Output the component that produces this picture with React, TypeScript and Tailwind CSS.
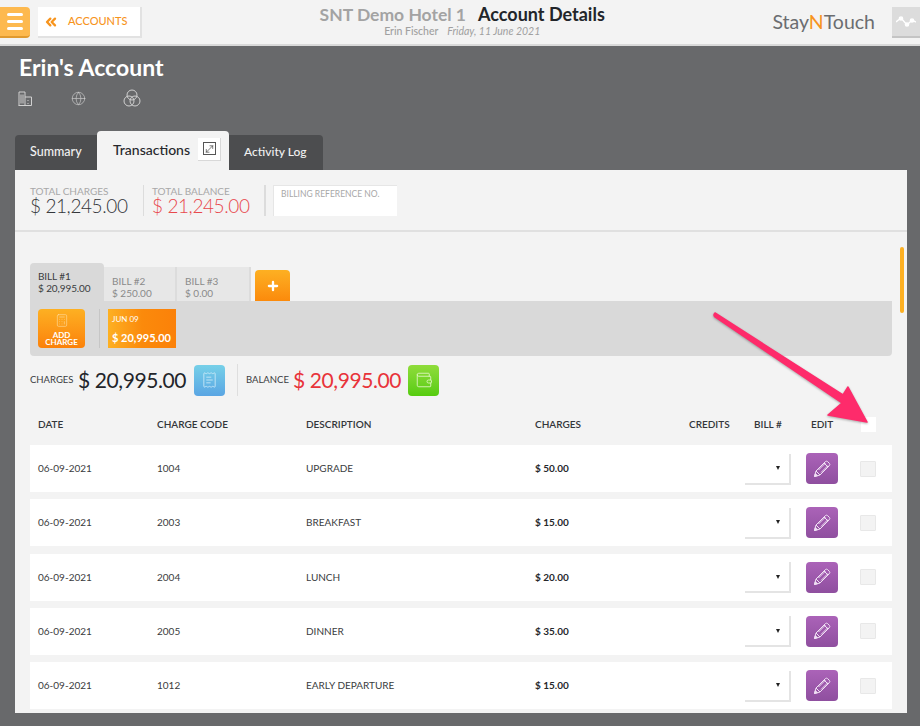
import React from 'react';
import { ChevronsLeft, Globe, MoveDiagonal, Plus, Calculator, Wallet, ReceiptText } from 'lucide-react';

interface Charge {
  date: string;
  code: string;
  description: string;
  amount: string;
}

const charges: Charge[] = [
  { date: '06-09-2021', code: '1004', description: 'UPGRADE', amount: '$ 50.00' },
  { date: '06-09-2021', code: '2003', description: 'BREAKFAST', amount: '$ 15.00' },
  { date: '06-09-2021', code: '2004', description: 'LUNCH', amount: '$ 20.00' },
  { date: '06-09-2021', code: '2005', description: 'DINNER', amount: '$ 35.00' },
  { date: '06-09-2021', code: '1012', description: 'EARLY DEPARTURE', amount: '$ 15.00' }
];

const columns = 'grid grid-cols-[119px_149px_229px_154px_56px_61px_54px_32px] items-center pl-2';

const Header = () => (
  <header className="h-[46px] bg-[#f3f3f3] border-b-2 border-[#d9d9d9] flex items-center relative">
    <button className="w-[30px] h-[31px] mt-[1px] bg-[#fdb94f] border-b-2 border-[#e09a30] rounded-r-sm flex flex-col items-center justify-center gap-[4px]">
      <span className="w-[16px] h-[3px] bg-white rounded-sm" />
      <span className="w-[16px] h-[3px] bg-white rounded-sm" />
      <span className="w-[16px] h-[3px] bg-white rounded-sm" />
    </button>
    <button className="ml-2 mt-[1px] w-[104px] h-[31px] bg-white border-r-2 border-b-2 border-[#e2e2e2] flex items-center pl-[5px] text-[#f7941d] text-[11px] font-medium">
      <ChevronsLeft className="w-[16px] h-[16px]" strokeWidth={3.5} />
      <span className="ml-[9px]">ACCOUNTS</span>
    </button>
    <div className="flex-1 flex flex-col items-center pl-[10px] -mt-[3px]">
      <div className="flex items-baseline gap-[12px] leading-[18px]">
        <span className="text-[17.5px] font-bold text-[#a3a3a3]">SNT Demo Hotel 1</span>
        <span className="text-[18px] font-bold text-[#22252a]">Account Details</span>
      </div>
      <div className="flex gap-[9px] text-[10.5px] leading-[12px] text-[#a0a0a0] mt-[1px]">
        <span className="font-medium">Erin Fischer</span>
        <span className="italic">Friday, 11 June 2021</span>
      </div>
    </div>
    <div className="text-[19.5px] text-[#6b6d70] mr-[17px]">
      Stay<span className="text-[#f7941d]">N</span>Touch
    </div>
    <button className="w-[28px] h-[31px] mt-[1px] bg-[#dcdcdc] border-b-2 border-[#c4c4c4] flex items-center justify-center">
      <svg width="20" height="12" viewBox="0 0 20 12" fill="none" stroke="white" strokeWidth="1.4">
        <path d="M0 6 L5 2 L11 9 L16 4 L20 6" />
        <circle cx="5" cy="2.5" r="1.6" fill="white" />
        <circle cx="11" cy="8.5" r="1.6" fill="white" />
        <circle cx="16" cy="4.5" r="1.6" fill="white" />
      </svg>
    </button>
  </header>
);

const TabBar = () => (
  <div className="flex items-end h-[39px] ml-[15px]">
    <div className="w-[82px] h-[35px] bg-[#4c4d4f] rounded-tl-sm flex items-center pl-[15px] text-[12.5px] font-medium text-[#f1f1f1]">Summary</div>
    <div className="w-[132px] h-[39px] bg-[#f3f3f3] rounded-t-sm flex items-center pl-[16px] pb-[3px] text-[14px] font-medium text-[#26282c]">
      Transactions
      <span className="ml-[8px] w-[23px] h-[23px] bg-white border-r border-b border-[#d8d8d8] flex items-center justify-center">
        <span className="w-[13px] h-[13px] border border-[#555] flex items-center justify-center">
          <MoveDiagonal className="w-[12px] h-[12px] text-[#333]" strokeWidth={1.4} />
        </span>
      </span>
    </div>
    <div className="w-[94px] h-[35px] bg-[#4c4d4f] rounded-tr-sm flex items-center pl-[15px] pb-[1px] text-[12px] font-medium text-[#f1f1f1]">Activity Log</div>
  </div>
);

const Totals = () => (
  <div className="h-[62px] border-b-2 border-[#e0e0e0] flex items-start pl-[15px] pt-[15px] whitespace-nowrap">
    <div className="w-[113px] h-[31px] pt-[1px] flex flex-col">
      <span className="text-[10px] leading-[11px] text-[#a8a8a8]">TOTAL CHARGES</span>
      <span className="text-[19px] leading-[17px] font-light tracking-[-0.4px] text-[#33363a]">$ 21,245.00</span>
    </div>
    <div className="w-[121px] h-[31px] pt-[1px] border-l border-[#dcdcdc] pl-[8px] flex flex-col">
      <span className="text-[10px] leading-[11px] text-[#a8a8a8]">TOTAL BALANCE</span>
      <span className="text-[19px] leading-[17px] font-light tracking-[-0.4px] text-[#e8474c]">$ 21,245.00</span>
    </div>
    <div className="h-[31px] border-l-2 border-[#dcdcdc]" />
    <div className="ml-[7px] w-[124px] h-[31px] bg-white border-l border-t border-[#e6e6e6] pl-[7px] text-[8.5px] leading-[16px] text-[#a8a8a8]">
      BILLING REFERENCE NO.
    </div>
  </div>
);

const BillTabs = () => (
  <div className="flex items-end h-[38px] mt-[31px] ml-[15px]">
    <div className="w-[74px] h-[38px] bg-[#d9d9d9] rounded-t-sm pl-[8px] pt-[7px] text-[10px] leading-[12px] tracking-[-0.1px] text-[#3a3c40]">
      BILL #1
      <div>$ 20,995.00</div>
    </div>
    <div className="w-[73px] h-[34px] bg-[#e7e7e7] border-r-2 border-[#dcdcdc] pl-[8px] pt-[8px] text-[10px] leading-[12px] text-[#8a8a8a]">
      BILL #2
      <div>$ 250.00</div>
    </div>
    <div className="w-[74px] h-[34px] bg-[#e7e7e7] border-r-2 border-[#dcdcdc] pl-[8px] pt-[8px] text-[10px] leading-[12px] text-[#8a8a8a]">
      BILL #3
      <div>$ 0.00</div>
    </div>
    <button className="ml-[4px] w-[35px] h-[31px] bg-gradient-to-b from-[#fdb022] to-[#fb8a0b] rounded-t-sm flex items-center justify-center">
      <Plus className="w-[14px] h-[14px] text-white" strokeWidth={4} />
    </button>
  </div>
);

const DayPanel = () => (
  <div className="mx-[15px] h-[55px] bg-[#d9d9d9] rounded-b-sm flex items-center pl-[8px] pb-[1px]">
    <button className="w-[47px] h-[39px] bg-gradient-to-b from-[#fdb022] to-[#fb8109] rounded-sm flex flex-col items-center text-white text-[8px] leading-[7px] font-bold pt-[3px]">
      <Calculator className="w-[14px] h-[17px] text-[#fde0a8] mb-[3px]" strokeWidth={1} />
      <span className="w-[36px] text-center">ADD CHARGE</span>
    </button>
    <div className="w-px h-[39px] bg-[#c6c6c6] ml-[14px] mr-[8px]" />
    <div className="w-[68px] h-[39px] bg-gradient-to-r from-[#fdb022] via-[#fb8a0b] to-[#fb8109] text-white pl-[4px] pt-[5px]">
      <div className="text-[8px] leading-[10px]">JUN 09</div>
      <div className="text-[11px] leading-[14px] font-bold mt-[7px] whitespace-nowrap">$ 20,995.00</div>
    </div>
  </div>
);

const Balances = () => (
  <div className="mt-2 ml-[15px] h-[32px] flex items-center whitespace-nowrap">
    <span className="w-[43px] text-[9.5px] text-[#3a3c40]">CHARGES</span>
    <span className="ml-[5px] w-[108px] text-[21px] tracking-[-0.4px] text-[#22252a]">$ 20,995.00</span>
    <button className="ml-[8px] w-[31px] h-[31px] bg-gradient-to-b from-[#76d0e8] to-[#5aa5e3] rounded-sm flex items-center justify-center">
      <ReceiptText className="w-[17px] h-[18px] text-[#d8f0fa]" strokeWidth={1.1} />
    </button>
    <div className="w-px h-[32px] bg-[#dedede] ml-[12px] mr-[8px]" />
    <span className="w-[42px] text-[9.5px] text-[#3a3c40]">BALANCE</span>
    <span className="ml-[5px] w-[107px] text-[21px] tracking-[-0.4px] text-[#e8333a]">$ 20,995.00</span>
    <button className="ml-[8px] w-[31px] h-[31px] bg-gradient-to-b from-[#8fdc3a] to-[#55cc0d] rounded-sm flex items-center justify-center">
      <Wallet className="w-[18px] h-[18px] text-[#e4f8c9]" strokeWidth={1.1} />
    </button>
  </div>
);

const PencilIcon = () => (
  <svg width="18" height="18" viewBox="0 0 18 18" fill="none" stroke="#f0e0f4" strokeWidth="1" strokeLinejoin="round">
    <path d="M1.5 16.5 L3 11 L12.5 1.5 Q13.5 0.8 14.5 1.5 L16.5 3.5 Q17.2 4.5 16.5 5.5 L7 15 Z" />
    <path d="M3 11 L7 15 M11 3 L15 7 M5.5 10 L12.5 3 M8 12.5 L15 5.5" />
    <path d="M1.5 16.5 L2.3 13.5 L4.5 15.7 Z" fill="#f0e0f4" />
  </svg>
);

const ChargeTable = () => (
  <div className="mx-[15px]">
    <div className={`${columns} h-[49px] pt-[7px] text-[10px] font-semibold text-[#33363a]`}>
      <span>DATE</span>
      <span>CHARGE CODE</span>
      <span>DESCRIPTION</span>
      <span>CHARGES</span>
      <span>CREDITS</span>
      <span className="pl-[9px]">BILL #</span>
      <span className="pl-[5px]">EDIT</span>
      <span className="w-[15px] h-[15px] bg-white ml-[1px]" />
    </div>
    <div className="flex flex-col gap-[7.25px]">
      {charges.map((charge) => (
        <div key={charge.code} className={`${columns} h-[47px] bg-white text-[10px] text-[#3a3c40]`}>
          <span>{charge.date}</span>
          <span>{charge.code}</span>
          <span>{charge.description}</span>
          <span className="font-bold text-[#26282c]">{charge.amount}</span>
          <span />
          <div className="w-[46px] h-[31px] mt-[1px] border-r-2 border-b-2 border-[#e4e4e4] flex items-center justify-end pr-[9px]">
            <span className="w-0 h-0 border-l-[2.5px] border-r-[2.5px] border-t-[4px] border-l-transparent border-r-transparent border-t-[#222]" />
          </div>
          <button className="w-[32px] h-[31px] bg-gradient-to-b from-[#ab63b8] to-[#8f4f9f] rounded-sm flex items-center justify-center">
            <PencilIcon />
          </button>
          <span className="w-[16px] h-[16px] bg-[#f3f3f3] border border-[#e8e8e8] rounded-[1px]" />
        </div>
      ))}
    </div>
  </div>
);

const Arrow = () => (
  <svg className="absolute left-[710px] top-[310px] drop-shadow-[0_1px_1px_rgba(0,0,0,0.3)]" width="170" height="125" viewBox="0 0 170 125">
    <path
      d="M5 3 Q3 5 5 7 L132 93 L118 105 L157 112 L138 77 L133 85 Z"
      fill="#fe2b6b"
      stroke="#fe2b6b"
      strokeWidth="1.5"
      strokeLinejoin="round"
    />
  </svg>
);

const App = () => {
  return (
    <div className="w-[920px] h-[726px] overflow-hidden relative bg-[#68696b]" style={{ fontFamily: 'Lato, "Noto Sans", sans-serif' }}>
      <Header />
      <h1 className="ml-[19px] mt-[7px] text-[23px] leading-[28px] font-bold text-white">Erin's Account</h1>
      <div className="ml-[18px] mt-[9px] h-[16px] flex items-center text-[#d0d0d0]">
        <svg className="w-[15px] h-[15px]" viewBox="0 0 15 15" fill="none" stroke="currentColor" strokeWidth="1">
          <path d="M1 14.5V1h6v13.5M7 6h6.5v8.5H0.5M3 3.5v9M5 3.5v9M10 9v1M10 12v1" />
        </svg>
        <Globe className="w-[15px] h-[15px] ml-[38px]" strokeWidth={1} />
        <svg className="ml-[37px] w-[18px] h-[18px]" viewBox="0 0 18 18" fill="none" stroke="currentColor" strokeWidth="1">
          <circle cx="9" cy="6" r="5" />
          <circle cx="6" cy="12" r="5" />
          <circle cx="12" cy="12" r="5" />
        </svg>
      </div>
      <div className="mt-[25px]">
        <TabBar />
      </div>
      <main className="ml-[15px] w-[892px] h-[543px] bg-[#f3f3f3]">
        <Totals />
        <BillTabs />
        <DayPanel />
        <Balances />
        <ChargeTable />
      </main>
      <div className="absolute left-[900px] top-[247px] w-[4px] h-[66px] bg-[#fdb022] rounded-sm" />
      <Arrow />
    </div>
  );
};

export default App;
